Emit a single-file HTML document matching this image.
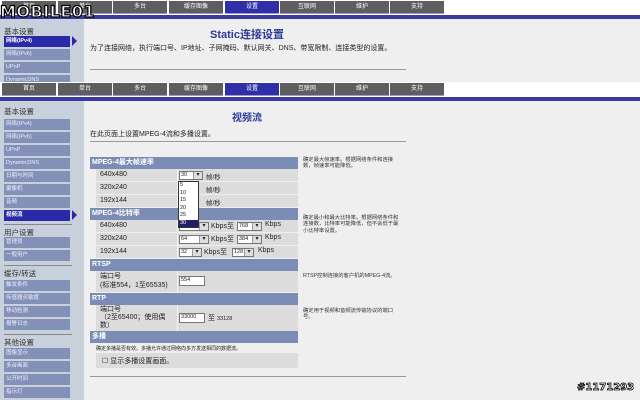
<!DOCTYPE html>
<html><head><meta charset="utf-8"><style>
*{margin:0;padding:0;box-sizing:border-box}
body{width:640px;height:400px;overflow:hidden;background:#efefef;position:relative;font-family:"Liberation Sans","Noto Sans CJK SC",sans-serif;color:#222}
.a{position:absolute}
.tab{position:absolute;height:13px;background:#5e5e5e;color:#fff;font-size:6px;line-height:12px;text-align:center;border-bottom:1px solid #9a9ac0;width:54px}
.tab.on{background:#2f2fa8}
.bar{position:absolute;left:0;width:640px;height:4px;background:#3a3a9c}
.side{position:absolute;left:0;width:84px;background:#c8d0dc}
.it{position:absolute;left:4px;width:66px;height:11px;background:#8391b8;color:#eef;font-size:5.5px;line-height:11px;padding-left:2px}
.it.on{background:#2a2aa8;color:#fff;font-weight:bold}
.tri{position:absolute;left:72px;width:0;height:0;border-left:5px solid #2a2aa8;border-top:5px solid transparent;border-bottom:5px solid transparent}
.hd{position:absolute;left:4px;font-size:7.5px;color:#333}
.sep{position:absolute;left:4px;width:68px;height:1px;background:#888}
.sh{position:absolute;left:90px;width:208px;height:12px;background:#7b8db5;color:#fff;font-size:7px;font-weight:bold;line-height:12px;padding-left:2px}
.row{position:absolute;left:96px;width:202px;background:#dcdcdc;font-size:7px}
.lab{position:absolute;left:4px}
.vc{position:absolute;left:81px;top:0;bottom:0;border-left:1px solid #f4f4f4}
.sel{position:absolute;height:9px;background:#fff;border:1px solid #777;font-size:5.5px;line-height:7px;padding-left:1px}
.sel:after{content:"▾";position:absolute;right:0;top:0;width:8px;height:7px;background:#ddd;border-left:1px solid #999;font-size:6px;text-align:center;line-height:7px}
.desc{position:absolute;left:303px;font-size:5.3px;line-height:6.3px;color:#333;width:96px}
</style></head><body>
<div class="a" style="left:0;top:0;width:640px;height:15px;background:#fff"></div>
<div class="tab" style="left:2px;top:1px">首页</div>
<div class="tab" style="left:58px;top:1px">单台</div>
<div class="tab" style="left:113px;top:1px">多台</div>
<div class="tab" style="left:169px;top:1px">缓存图像</div>
<div class="tab on" style="left:225px;top:1px">设置</div>
<div class="tab" style="left:280px;top:1px">互联网</div>
<div class="tab" style="left:335px;top:1px">维护</div>
<div class="tab" style="left:390px;top:1px">支持</div>
<div class="bar" style="top:15px"></div>
<div class="side" style="top:19px;height:64px"></div>
<div class="hd" style="top:26px">基本设置</div>
<div class="it on" style="top:36px">网络(IPv4)</div><div class="tri" style="top:36px"></div>
<div class="it" style="top:49px">网络(IPv6)</div>
<div class="it" style="top:62px">UPnP</div>
<div class="it" style="top:75px;height:8px">DynamicDNS</div>
<div class="a" style="left:210px;top:26px;font-size:11px;font-weight:bold;color:#2d3a98">Static连接设置</div>
<div class="a" style="left:90px;top:44px;width:320px;font-size:7px;line-height:9px">为了连接网络，执行端口号、IP地址、子网掩码、默认网关、DNS、带宽限制、连接类型的设置。</div>
<div class="a" style="left:90px;top:69px;width:316px;height:1px;background:#999"></div>
<div class="a" style="left:0;top:82px;width:640px;height:15px;background:#fff"></div>
<div class="tab" style="left:2px;top:83px">首页</div>
<div class="tab" style="left:58px;top:83px">单台</div>
<div class="tab" style="left:113px;top:83px">多台</div>
<div class="tab" style="left:169px;top:83px">缓存图像</div>
<div class="tab on" style="left:225px;top:83px">设置</div>
<div class="tab" style="left:280px;top:83px">互联网</div>
<div class="tab" style="left:335px;top:83px">维护</div>
<div class="tab" style="left:390px;top:83px">支持</div>
<div class="bar" style="top:97px"></div>
<div class="side" style="top:101px;height:299px"></div>
<div class="hd" style="top:106px">基本设置</div>
<div class="it" style="top:119px">网络(IPv4)</div>
<div class="it" style="top:132px">网络(IPv6)</div>
<div class="it" style="top:145px">UPnP</div>
<div class="it" style="top:158px">DynamicDNS</div>
<div class="it" style="top:171px">日期与时间</div>
<div class="it" style="top:184px">摄像机</div>
<div class="it" style="top:197px">音频</div>
<div class="it on" style="top:210px">视频流</div><div class="tri" style="top:210px"></div>
<div class="sep" style="top:224px"></div>
<div class="hd" style="top:227px">用户设置</div>
<div class="it" style="top:237px">管理员</div>
<div class="it" style="top:250px">一般用户</div>
<div class="sep" style="top:265px"></div>
<div class="hd" style="top:268px">缓存/转送</div>
<div class="it" style="top:280px">触发条件</div>
<div class="it" style="top:293px">传感器灵敏度</div>
<div class="it" style="top:306px">移动检测</div>
<div class="it" style="top:319px">报警日志</div>
<div class="sep" style="top:334px"></div>
<div class="hd" style="top:337px">其他设置</div>
<div class="it" style="top:348px">图像显示</div>
<div class="it" style="top:361px">多台画面</div>
<div class="it" style="top:374px">公开时间</div>
<div class="it" style="top:387px">指示灯</div>
<div class="a" style="left:232px;top:109px;font-size:10px;font-weight:bold;color:#2d3a98">视频流</div>
<div class="a" style="left:90px;top:129px;font-size:7px">在此页面上设置MPEG-4流和多播设置。</div>
<div class="a" style="left:90px;top:141px;width:316px;height:1px;background:#999"></div>
<div class="sh" style="top:157px">MPEG-4最大帧速率</div>
<div class="row" style="top:169px;height:12px"><span class="lab" style="top:2px">640x480</span><div class="vc"></div></div>
<div class="row" style="top:182px;height:12px"><span class="lab" style="top:2px">320x240</span><div class="vc"></div></div>
<div class="row" style="top:195px;height:12px"><span class="lab" style="top:2px">192x144</span><div class="vc"></div></div>
<div class="sel" style="left:179px;top:171px;width:24px">30</div>
<div class="a" style="left:206px;top:171px;font-size:6.5px">帧/秒</div>
<div class="a" style="left:206px;top:184px;font-size:6.5px">帧/秒</div>
<div class="a" style="left:206px;top:197px;font-size:6.5px">帧/秒</div>
<div class="sh" style="top:208px">MPEG-4比特率</div>
<div class="row" style="top:220px;height:12px"><span class="lab" style="top:2px">640x480</span><div class="vc"></div></div>
<div class="row" style="top:233px;height:12px"><span class="lab" style="top:2px">320x240</span><div class="vc"></div></div>
<div class="row" style="top:246px;height:12px"><span class="lab" style="top:2px">192x144</span><div class="vc"></div></div>
<div class="sel" style="left:179px;top:222px;width:30px">192</div><div class="a" style="left:211px;top:221px;font-size:7px">Kbps至</div>
<div class="sel" style="left:237px;top:222px;width:25px">768</div><div class="a" style="left:265px;top:221px;font-size:7px">Kbps</div>
<div class="sel" style="left:179px;top:235px;width:30px">64</div><div class="a" style="left:211px;top:234px;font-size:7px">Kbps至</div>
<div class="sel" style="left:237px;top:235px;width:25px">384</div><div class="a" style="left:265px;top:234px;font-size:7px">Kbps</div>
<div class="sel" style="left:179px;top:248px;width:23px">32</div><div class="a" style="left:204px;top:247px;font-size:7px">Kbps至</div>
<div class="sel" style="left:232px;top:248px;width:22px">128</div><div class="a" style="left:258px;top:247px;font-size:7px">Kbps</div>
<div class="a" style="left:178px;top:181px;width:21px;height:47px;background:#fff;border:1px solid #333;font-size:5.5px;line-height:7.5px;padding-left:1px">5<br>10<br>15<br>20<br>25<br><span style="display:block;margin-left:-1px;padding-left:1px;background:#20206a;color:#fff">30</span></div>
<div class="sh" style="top:259px">RTSP</div>
<div class="row" style="top:271px;height:21px"><span class="lab" style="top:1px;line-height:9px">端口号<br>(标准554，1至65535)</span><div class="vc"></div></div>
<div class="a" style="left:179px;top:276px;width:26px;height:10px;background:#fff;border:1px solid #777;font-size:5.5px;padding-left:1px">554</div>
<div class="sh" style="top:293px">RTP</div>
<div class="row" style="top:305px;height:26px"><span class="lab" style="top:1px;line-height:8px">端口号<br>（2至65400；使用偶<br>数）</span><div class="vc"></div></div>
<div class="a" style="left:179px;top:313px;width:26px;height:10px;background:#fff;border:1px solid #777;font-size:5.5px;padding-left:1px">33000</div>
<div class="a" style="left:208px;top:313px;font-size:7px">至 <span style="font-size:5.5px">33128</span></div>
<div class="sh" style="top:331px">多播</div>
<div class="a" style="left:96px;top:345px;font-size:5px">确定多播是否有效。多播允许通过网络向多方发送相同的数据流。</div>
<div class="row" style="top:353px;height:15px"><span class="lab" style="top:3px;left:6px">☐ 显示多播设置画面。</span></div>
<div class="a" style="left:90px;top:376px;width:316px;height:1px;background:#999"></div>
<div class="desc" style="top:157px">确定最大帧速率。根据网络条件和连接数，帧速率可能降低。</div>
<div class="desc" style="top:215px">确定最小和最大比特率。根据网络条件和连接数，比特率可能降低，但不会低于最小比特率设置。</div>
<div class="desc" style="top:273px">RTSP控制连接的客户机的MPEG-4流。</div>
<div class="desc" style="top:308px">确定用于视频和音频流传输协议的端口号。</div>
<div class="a" style="left:0;top:2px;font-size:16px;font-weight:bold;letter-spacing:0.5px;color:#fff;-webkit-text-stroke:1.2px #000;font-family:'DejaVu Sans',sans-serif;line-height:19px">MOBILE01</div>
<div class="a" style="left:577px;top:382px;font-size:10px;font-weight:bold;color:#fff;-webkit-text-stroke:0.8px #000;font-family:'DejaVu Sans',sans-serif">#1171293</div>
</body></html>
